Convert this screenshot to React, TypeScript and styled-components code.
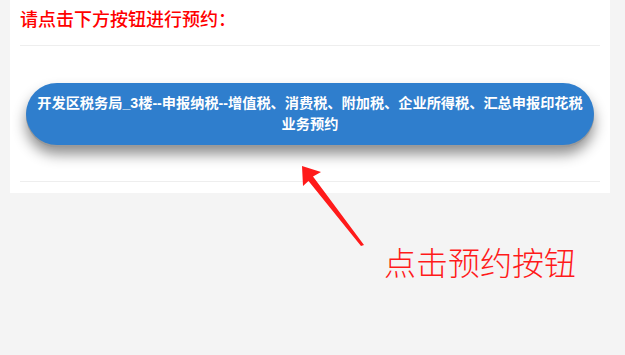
import * as React from 'react';
import styled, { createGlobalStyle } from 'styled-components';

const GlobalStyle = createGlobalStyle`
  html, body {
    margin: 0;
    padding: 0;
    background: #f4f4f4;
    font-family: "Liberation Sans", "Noto Sans CJK SC", sans-serif;
  }
`;

const Page = styled.div`
  position: relative;
  width: 625px;
  height: 355px;
  overflow: hidden;
`;

const Panel = styled.div`
  margin-left: 10px;
  width: 600px;
  background: #fff;
  padding: 0 10px 11px;
  box-sizing: border-box;
`;

const Title = styled.h3`
  margin: 0;
  padding: 8px 0 13px;
  font-size: 18px;
  line-height: 24px;
  font-weight: 500;
  color: #ff0000;
  border-bottom: 1px solid #eeeeee;
`;

const ButtonRow = styled.div`
  display: flex;
  justify-content: center;
  padding: 37px 6px 36px;
  border-bottom: 1px solid #eeeeee;
`;

const BookButton = styled.button`
  width: 568px;
  height: 62px;
  border: none;
  border-radius: 31px;
  background: #2f7ecd;
  color: #fff;
  font-family: "Liberation Sans", "Noto Sans CJK SC", sans-serif;
  font-size: 14.2px;
  font-weight: bold;
  line-height: 21px;
  padding: 0 6px;
  box-shadow: 0 2px 0 #9a9a9a, 0 9px 14px rgba(0, 0, 0, 0.45);
  cursor: pointer;
`;

const Arrow = styled.svg`
  position: absolute;
  left: 0;
  top: 0;
  pointer-events: none;
`;

const Hint = styled.div`
  position: absolute;
  left: 384px;
  top: 241px;
  font-size: 32px;
  line-height: 40px;
  color: #ff1a1a;
  font-family: "Noto Sans CJK SC", sans-serif;
  font-weight: 300;
`;

const App = () => {
  return (
    <Page>
      <GlobalStyle />
      <Panel>
        <Title>请点击下方按钮进行预约：</Title>
        <ButtonRow>
          <BookButton>
            开发区税务局_3楼--申报纳税--增值税、消费税、附加税、企业所得税、汇总申报印花税业务预约
          </BookButton>
        </ButtonRow>
      </Panel>
      {/* 标注箭头 */}
      <Arrow width="625" height="355" viewBox="0 0 625 355">
        <polygon
          points="302,166 321,172 313,176.5 364,245 361,246 308.5,181 303,186"
          fill="#ff1a1a"
        />
      </Arrow>
      <Hint>点击预约按钮</Hint>
    </Page>
  );
};

export default App;
